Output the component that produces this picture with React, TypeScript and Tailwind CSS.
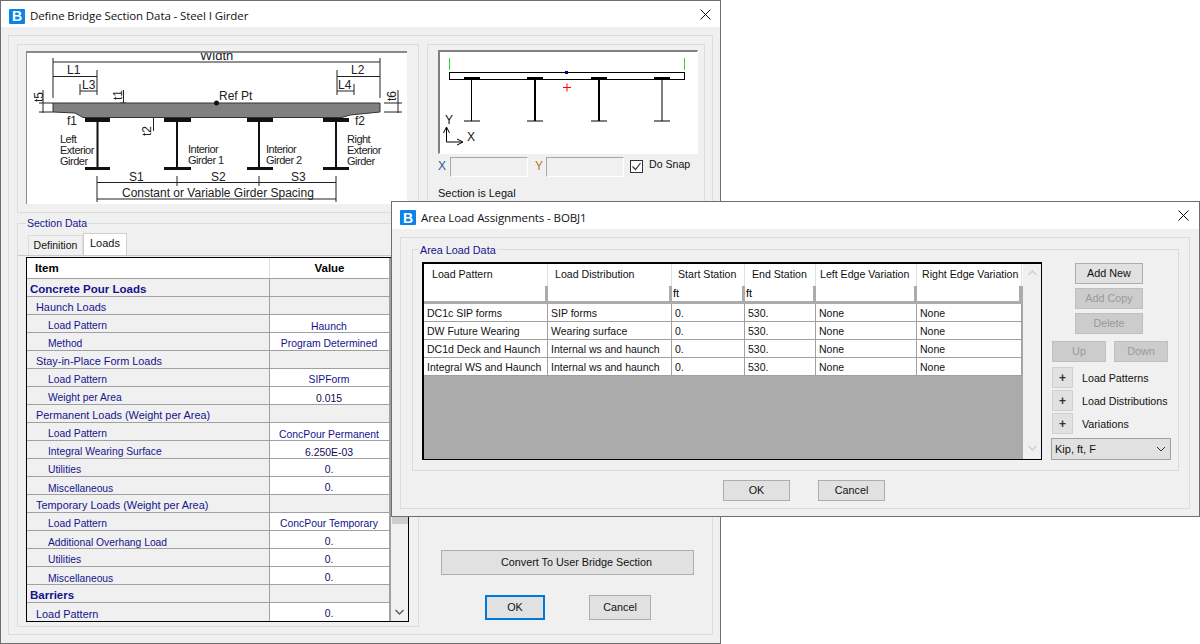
import React from "react";

const F = "font-['Liberation_Sans',Arial,sans-serif]";

function BIcon() {
  return (
    <div className="w-[16px] h-[15px] mt-[4px] bg-[#0b84ea] rounded-[1px] flex items-center justify-center text-white font-bold text-[14px] leading-none font-['Liberation_Sans',sans-serif]">
      B
    </div>
  );
}

function CloseX() {
  return (
    <svg width="11" height="11" viewBox="0 0 11 11" className="shrink-0">
      <path d="M0.5 0.5L10.5 10.5M10.5 0.5L0.5 10.5" stroke="#111" strokeWidth="1" fill="none" />
    </svg>
  );
}

function TitleBar({ title, h, closeMr }: { title: string; h: string; closeMr: string }) {
  return (
    <div className={`${h} bg-white flex items-center pl-[8px] ${closeMr}`}>
      <BIcon />
      <span className="ml-[5px] mt-[4px] text-[11.5px] text-[#111] font-['Open_Sans',sans-serif] tracking-[-0.1px] flex-1">{title}</span>
      <CloseX />
    </div>
  );
}

function Btn({ label, w, h = "h-[21px]", disabled, focus, extra = "" }: { label: string; w: string; h?: string; disabled?: boolean; focus?: boolean; extra?: string }) {
  const look = focus
    ? "border-2 border-[#0078d7] bg-[#e1e1e1] text-[#111]"
    : disabled
    ? "border border-[#bfbfbf] bg-[#cccccc] text-[#9a9a9a]"
    : "border border-[#adadad] bg-[#e1e1e1] text-[#111]";
  return <div className={`${w} ${h} ${look} ${extra} flex items-center justify-center text-[10.8px] shrink-0`}>{label}</div>;
}

type Row = { label: string; level: 0 | 1 | 2; value?: string; bold?: boolean; ld?: boolean; vd?: boolean; num?: boolean };

const rows: Row[] = [
  { label: "Concrete Pour Loads", level: 0, bold: true },
  { label: "Haunch Loads", level: 1 },
  { label: "Load Pattern", level: 2, value: "Haunch", vd: true },
  { label: "Method", level: 2, value: "Program Determined" },
  { label: "Stay-in-Place Form Loads", level: 1 },
  { label: "Load Pattern", level: 2, value: "SIPForm" },
  { label: "Weight per Area", level: 2, value: "0.015", vd: true, num: true },
  { label: "Permanent Loads (Weight per Area)", level: 1 },
  { label: "Load Pattern", level: 2, value: "ConcPour Permanent", vd: true },
  { label: "Integral Wearing Surface", level: 2, value: "6.250E-03", vd: true, num: true },
  { label: "Utilities", level: 2, value: "0.", num: true },
  { label: "Miscellaneous", level: 2, value: "0.", ld: true, num: true },
  { label: "Temporary Loads (Weight per Area)", level: 1 },
  { label: "Load Pattern", level: 2, value: "ConcPour Temporary" },
  { label: "Additional Overhang Load", level: 2, value: "0.", ld: true, num: true },
  { label: "Utilities", level: 2, value: "0.", num: true },
  { label: "Miscellaneous", level: 2, value: "0.", ld: true, num: true },
  { label: "Barriers", level: 0, bold: true },
  { label: "Load Pattern", level: 1, value: "0.", num: true },
];

function BridgeDiagram() {
  const t = { fontFamily: "'Liberation Sans', sans-serif", fill: "#222" };
  const girders = [
    [85, 110, 97.5],
    [164, 191, 177],
    [247, 273, 259],
    [323, 349, 336],
  ];
  const small = { ...t, fontSize: 11, letterSpacing: -0.5 };
  return (
    <svg viewBox="26 51 381 152" width="381" height="152" className="block">
      <g stroke="#222" strokeWidth="1" fill="none">
        <path d="M53 62H380M53 58V98M380 58V98" />
        <path d="M53 76.5H97M97 70V95M80 91H97M80 84V95" />
        <path d="M337 76.5H380M337 70V95M337 91H354M354 84V95" />
        <path d="M97 176V202M177 176V186M259 176V186M336 176V202M97 182.5H336M97 199H336" />
        <path d="M43 90V113M39 103H53M39 112H53" />
        <path d="M398 90V113M384 103H402M384 112H402" />
        <path d="M123.5 90V118M120 103H126M120 117H126" />
        <path d="M153.5 114V131M150 117H157" />
      </g>
      <path d="M53 103H380V112L350 115L342 117.5H83L75 113L53 112Z" fill="#808080" stroke="#333" strokeWidth="1" />
      {girders.map(([a, b, c]) => (
        <g key={c} fill="#111">
          <rect x={a} y={118} width={b - a} height={4} />
          <rect x={c - 1} y={120} width={2} height={48} />
          <rect x={a} y={167} width={b - a} height={3} />
        </g>
      ))}
      <circle cx="216.5" cy="103" r="2.5" fill="#111" />
      <text x="200" y="60" fontSize="13" style={t}>Width</text>
      <text x="67" y="74" fontSize="12" style={t}>L1</text>
      <text x="351" y="74" fontSize="12" style={t}>L2</text>
      <text x="82" y="89" fontSize="12" style={t}>L3</text>
      <text x="338" y="89" fontSize="12" style={t}>L4</text>
      <text x="219" y="100" fontSize="12" style={t}>Ref Pt</text>
      <text x="67" y="125" fontSize="12" style={t}>f1</text>
      <text x="355" y="125" fontSize="12" style={t}>f2</text>
      <text transform="translate(43 102) rotate(-90)" fontSize="12" style={t}>t5</text>
      <text transform="translate(396 101) rotate(-90)" fontSize="12" style={t}>t6</text>
      <text transform="translate(122 100) rotate(-90)" fontSize="12" style={t}>t1</text>
      <text transform="translate(151 136) rotate(-90)" fontSize="12" style={t}>t2</text>
      <text x="60" y="143" style={small}>Left</text>
      <text x="60" y="154" style={small}>Exterior</text>
      <text x="60" y="165" style={small}>Girder</text>
      <text x="188" y="153" style={small}>Interior</text>
      <text x="188" y="164" style={small}>Girder 1</text>
      <text x="266" y="153" style={small}>Interior</text>
      <text x="266" y="164" style={small}>Girder 2</text>
      <text x="347" y="143" style={small}>Right</text>
      <text x="347" y="154" style={small}>Exterior</text>
      <text x="347" y="165" style={small}>Girder</text>
      <text x="129" y="181" fontSize="12" style={t}>S1</text>
      <text x="211" y="181" fontSize="12" style={t}>S2</text>
      <text x="291" y="181" fontSize="12" style={t}>S3</text>
      <text x="122" y="197" fontSize="12" style={t}>Constant or Variable Girder Spacing</text>
    </svg>
  );
}

function MiniSection() {
  const t = { fontFamily: "'Liberation Sans', sans-serif", fill: "#111", fontSize: 12 };
  const g = [
    [464, 471.5, 1],
    [527, 535, 2],
    [591, 599, 2],
    [654, 662, 1],
  ];
  return (
    <svg viewBox="439 51 258 102" width="258" height="102" className="block">
      <path d="M449.5 58V70M684.5 58V70" stroke="#22dd22" strokeWidth="1" />
      <rect x="449.5" y="72.5" width="235" height="7" fill="#fff" stroke="#000" />
      {g.map(([a, c, w]) => (
        <g key={a} fill="#000">
          <rect x={a} y={77} width={16} height={3} />
          <rect x={c - w / 2} y={80} width={w} height={41} />
          <rect x={a} y={120.5} width={16} height={1} />
        </g>
      ))}
      <rect x="565" y="71" width="3" height="3" fill="#00007f" />
      <path d="M567 83.5V91.5M563 87.5H571" stroke="#f00" strokeWidth="1" />
      <path d="M446.5 142V128M446.5 142H462M443.5 133L446.5 127L449.5 133M457 139L463 142L457 145" stroke="#000" fill="none" />
      <text x="445" y="124" style={t}>Y</text>
      <text x="467" y="141" style={t}>X</text>
    </svg>
  );
}

function LeftGrid() {
  return (
    <div className="ml-[8px] mt-[1px] w-[383px] h-[365px] border border-black flex">
      <div className="w-[364px] border-r-2 border-[#a0a0a0] flex flex-col shrink-0">
        <div className="h-[21px] flex bg-white border-b border-[#a0a0a0] font-bold text-black text-[11.5px] shrink-0">
          <div className="w-[243px] border-r border-[#e0e0e0] pl-[8px] pt-[2px] flex items-center">Item</div>
          <div className="flex-1 pt-[2px] flex items-center justify-center">Value</div>
        </div>
        {rows.map((r, i) => (
          <div key={i} className="h-[18px] flex border-b border-[#a0a0a0] shrink-0 last:border-b-0 text-[#14148c] whitespace-nowrap">
            <div
              className={`w-[243px] border-r border-[#a0a0a0] bg-[#f0f0f0] flex items-center ${r.ld ? "pt-[6px]" : "pt-[4px]"} ${
                r.level === 0 ? "pl-[3px]" : r.level === 1 ? "pl-[9px]" : "pl-[21px]"
              } ${r.bold ? "font-bold text-[11.5px]" : r.level === 1 ? "text-[10.9px]" : "text-[10.3px]"}`}
            >
              {r.label}
            </div>
            <div
              className={`flex-1 flex items-center justify-center text-[10.4px] pr-[1px] ${r.vd ? "pt-[6px]" : "pt-[4px]"} ${
                r.value ? "bg-white" : "bg-[#f0f0f0]"
              } ${r.num ? "text-[#0c0c5c]" : ""}`}
            >
              {r.value}
            </div>
          </div>
        ))}
      </div>
      <div className="flex-1 flex flex-col items-stretch bg-[#f0f0f0] pl-[1px]">
        <div className="h-[18px]" />
        <div className="h-[248px] bg-[#cdcdcd]" />
        <div className="flex-1" />
        <svg width="17" height="16" viewBox="0 0 17 16" className="shrink-0 -ml-[1px]">
          <path d="M4.5 5L8.5 9L12.5 5" stroke="#606060" strokeWidth="1.5" fill="none" />
        </svg>
      </div>
    </div>
  );
}

function BackWindow() {
  return (
    <div className={`absolute left-0 top-0 w-[721px] h-[644px] border border-[#6e6e6e] bg-[#f0f0f0] flex flex-col ${F}`}>
      <TitleBar title="Define Bridge Section Data - Steel I Girder" h="h-[26px]" closeMr="pr-[9px]" />
      <div className="flex-1 pl-[7px] pt-[8px]">
        <div className="w-[705px] h-[600px] border border-[#dcdcdc] pl-[8px] pt-[8px] flex gap-[8px]">
          <div className="w-[402px] shrink-0">
            <div className="h-[169px] border border-[#dcdcdc] pl-[8px] pt-[6px]">
              <div className="w-[381px] h-[153px] border-t-2 border-l border-[#8a8a8a] bg-white overflow-hidden">
                <div className="-ml-[1px] -mt-[2px]">
                  <BridgeDiagram />
                </div>
              </div>
            </div>
            <div className="relative mt-[10px] h-[404px] border border-[#dcdcdc] pt-[9px]">
              <span className="absolute left-[8px] -top-[8px] bg-[#f0f0f0] px-[1px] text-[10.5px] text-[#14148c]">Section Data</span>
              <div className="flex items-end h-[23px] ml-0 border-b border-[#c8c8c8]">
                <div className="ml-[10px] w-[55px] h-[20px] bg-[#f0f0f0] border border-b-0 border-[#dcdcdc] flex items-center justify-center text-[10.5px] text-[#111]">Definition</div>
                <div className="w-[44px] h-[22px] bg-white border border-b-0 border-[#d0d0d0] flex items-start pt-[1px] justify-center text-[11px] text-[#111]">Loads</div>
              </div>
              <LeftGrid />
            </div>
          </div>
          <div className="w-[278px] shrink-0">
            <div className="h-[170px] border border-[#dcdcdc] pl-[10px] pt-[5px]">
              <div className="w-[260px] h-[104px] border-t-2 border-l-2 border-[#808080] border-r border-b border-r-white border-b-white bg-white overflow-hidden">
                <div className="-ml-[1px] -mt-[1px]">
                  <MiniSection />
                </div>
              </div>
              <div className="flex items-center h-[20px] mt-[3px] text-[12px] text-[#333]">
                <span className="w-[12px] -mt-[2px] text-[#2c5a9a]">X</span>
                <div className="w-[78px] h-[20px] border-t border-l border-[#a8a8a8] border-r border-b border-r-white border-b-white" />
                <span className="ml-[7px] w-[11px] -mt-[2px] text-[#b07a20]">Y</span>
                <div className="w-[78px] h-[20px] border-t border-l border-[#a8a8a8] border-r border-b border-r-white border-b-white" />
                <div className="ml-[6px] -mt-[2px] w-[13px] h-[13px] border border-[#333] bg-white flex items-center justify-center">
                  <svg width="11" height="11" viewBox="0 0 11 11"><path d="M1.5 5.5L4.5 8.5L9.5 2" stroke="#333" strokeWidth="1.2" fill="none" /></svg>
                </div>
                <span className="ml-[6px] -mt-[4px] text-[10.6px] text-[#111]">Do Snap</span>
              </div>
              <div className="mt-[8px] text-[11px] text-[#111]">Section is Legal</div>
            </div>
            <Btn label="Convert To User Bridge Section" w="w-[253px]" h="h-[25px]" extra="ml-[14px] mt-[336px] pl-[18px]" />
            <div className="flex ml-[58px] mt-[20px] gap-[44px]">
              <Btn label="OK" w="w-[60px]" h="h-[25px]" focus />
              <Btn label="Cancel" w="w-[62px]" h="h-[25px]" />
            </div>
          </div>
        </div>
      </div>
    </div>
  );
}

const cols = ["w-[124px]", "w-[124px]", "w-[73px]", "w-[71px]", "w-[101px]", "w-[105px]"];
const heads: [string, string][] = [
  ["Load Pattern", "pl-[8px]"],
  ["Load Distribution", "pl-[7px]"],
  ["Start Station", "pl-[6px]"],
  ["End Station", "pl-[7px]"],
  ["Left Edge Variation", "pl-[4px]"],
  ["Right Edge Variation", "pl-[5px]"],
];
const data = [
  ["DC1c SIP forms", "SIP forms", "0.", "530.", "None", "None"],
  ["DW Future Wearing", "Wearing surface", "0.", "530.", "None", "None"],
  ["DC1d Deck and Haunch", "Internal ws and haunch", "0.", "530.", "None", "None"],
  ["Integral WS and Haunch", "Internal ws and haunch", "0.", "530.", "None", "None"],
];
const filters = ["", "", "ft", "ft", "", ""];

function FrontGrid() {
  return (
    <div className="w-[620px] h-[198px] border-2 border-black border-r border-b flex bg-[#f0f0f0] shrink-0">
      <div className="w-[599px] bg-[#ababab] flex flex-col shrink-0">
        <div className="h-[22px] bg-white flex shrink-0">
          {heads.map(([h, p], i) => (
            <div key={i} className={`${cols[i]} ${p} border-r border-[#e0e0e0] flex items-center text-[10.6px] text-[#111] whitespace-nowrap`}>{h}</div>
          ))}
          <div className="flex-1" />
        </div>
        <div className="h-[18px] flex shrink-0 pr-[1px]">
          {filters.map((f, i) => (
            <div key={i} className={`${cols[i]} h-[15px] pr-[3px]`}>
              <div className="h-full bg-white text-[11px] text-black pl-[1px] leading-[15px]">{f}</div>
            </div>
          ))}
        </div>
        {data.map((row, r) => (
          <div key={r} className="h-[18px] flex bg-white border-b border-[#a0a0a0] shrink-0 mr-[1px]">
            {row.map((c, i) => (
              <div key={i} className={`${cols[i]} border-r border-[#a0a0a0] flex items-center pt-[2px] text-[10.5px] text-[#111] pl-[3px] whitespace-nowrap`}>{c}</div>
            ))}
          </div>
        ))}
      </div>
      <div className="flex-1 flex flex-col justify-between pt-[3px] pb-[5px] pl-[1px]">
        <svg width="17" height="12" viewBox="0 0 17 12"><path d="M4.5 8L8.5 4L12.5 8" stroke="#cfcfcf" strokeWidth="1.5" fill="none" /></svg>
        <svg width="17" height="12" viewBox="0 0 17 12"><path d="M4.5 4L8.5 8L12.5 4" stroke="#cfcfcf" strokeWidth="1.5" fill="none" /></svg>
      </div>
    </div>
  );
}

function PlusRow({ label, mt }: { label: string; mt: string }) {
  return (
    <div className={`flex items-center ${mt}`}>
      <div className="w-[21px] h-[21px] ml-[1px] border border-[#d0d0d0] bg-[#e1e1e1] flex items-center justify-center text-[12px] font-bold text-[#333]">+</div>
      <span className="ml-[9px] mt-[1px] text-[10.7px] text-[#111]">{label}</span>
    </div>
  );
}

function FrontWindow() {
  return (
    <div className={`absolute left-[391px] top-[201px] w-[809px] h-[316px] border border-[#6e6e6e] bg-[#f0f0f0] flex flex-col ${F}`}>
      <TitleBar title="Area Load Assignments - BOBJ1" h="h-[27px]" closeMr="pr-[10px]" />
      <div className="flex-1 pl-[8px] pt-[8px]">
        <div className="w-[790px] h-[272px] border border-[#dcdcdc] pl-[11px] pt-[11px]">
          <div className="relative w-[767px] h-[222px] border border-[#dcdcdc] pl-[9px] pt-[12px] flex gap-[9px]">
            <span className="absolute left-[6px] -top-[8px] bg-[#f0f0f0] px-[1px] text-[10.8px] text-[#14148c]">Area Load Data</span>
            <FrontGrid />
            <div className="w-[122px] shrink-0">
              <div className="flex flex-col items-start pl-[24px] gap-[4px] mt-[1px]">
                <Btn label="Add New" w="w-[68px]" />
                <Btn label="Add Copy" w="w-[68px]" disabled />
                <Btn label="Delete" w="w-[68px]" disabled />
              </div>
              <div className="flex pl-[1px] gap-[8px] mt-[7px]">
                <Btn label="Up" w="w-[54px]" disabled />
                <Btn label="Down" w="w-[54px]" disabled />
              </div>
              <PlusRow label="Load Patterns" mt="mt-[5px]" />
              <PlusRow label="Load Distributions" mt="mt-[2px]" />
              <PlusRow label="Variations" mt="mt-[2px]" />
              <div className="mt-[4px] w-[120px] h-[22px] border border-[#a0a0a0] bg-[#e1e1e1] flex items-center justify-between pl-[3px] pr-[4px] text-[11px] text-[#111]">
                <span>Kip, ft, F</span>
                <svg width="10" height="6" viewBox="0 0 10 6"><path d="M1 1L5 5L9 1" stroke="#333" fill="none" /></svg>
              </div>
            </div>
          </div>
          <div className="flex ml-[311px] mt-[9px] gap-[28px]">
            <Btn label="OK" w="w-[67px]" />
            <Btn label="Cancel" w="w-[67px]" />
          </div>
        </div>
      </div>
    </div>
  );
}

export default function App() {
  return (
    <div className="relative w-[1200px] h-[644px] bg-white overflow-hidden">
      <BackWindow />
      <FrontWindow />
    </div>
  );
}
